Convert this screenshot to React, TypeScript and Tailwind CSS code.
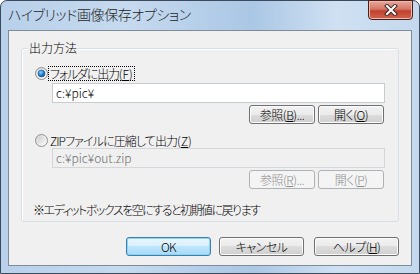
import React from "react";

const jp = "font-['Noto_Sans_CJK_JP',sans-serif] [font-feature-settings:'palt']";

function Radio({ checked }: { checked?: boolean }) {
    return (
        <svg width="13" height="13" viewBox="0 0 13 13" className="shrink-0">
            <defs>
                <linearGradient id="rOuter" x1="0" y1="0" x2="1" y2="1">
                    <stop offset="0" stopColor="#d6d6d6" />
                    <stop offset="1" stopColor="#ffffff" />
                </linearGradient>
                <linearGradient id="rInner" x1="0" y1="0" x2="1" y2="1">
                    <stop offset="0" stopColor="#cfcfcf" />
                    <stop offset="1" stopColor="#f6f6f6" />
                </linearGradient>
                <radialGradient id="rDot" cx="0.4" cy="0.35" r="0.7">
                    <stop offset="0" stopColor="#8fd0ff" />
                    <stop offset="0.5" stopColor="#2a8ad4" />
                    <stop offset="1" stopColor="#0b3f78" />
                </radialGradient>
            </defs>
            <circle cx="6.5" cy="6.5" r="6" fill="url(#rOuter)" stroke="#8e8f8f" strokeWidth="1" />
            <circle cx="6.5" cy="6.5" r="4" fill="url(#rInner)" />
            {checked && <circle cx="6.5" cy="6.5" r="3.5" fill="url(#rDot)" stroke="#1a5a9a" strokeWidth="0.5" />}
        </svg>
    );
}

function Btn({ children, w, disabled, primary }: { children: React.ReactNode; w: string; disabled?: boolean; primary?: boolean }) {
    const base = "flex items-center justify-center rounded-[3px] border text-[12px] leading-none tracking-[-0.5px]";
    if (disabled) {
        return <div className={`${base} ${w} border-[#adb2b5] bg-[#f4f4f4] text-[#8d8d8d]`}>{children}</div>;
    }
    if (primary) {
        return (
            <div className={`${base} ${w} border-[#3c7fb1] bg-[linear-gradient(#eaf6fd_0%,#d9f0fc_50%,#bee6fd_50%,#a7d9f5_100%)] text-black shadow-[inset_0_0_0_1px_#8fd3f5]`}>
                {children}
            </div>
        );
    }
    return (
        <div className={`${base} ${w} border-[#707070] bg-[linear-gradient(#f2f2f2_0%,#ebebeb_50%,#dddddd_50%,#cfcfcf_100%)] text-black shadow-[inset_0_0_0_1px_#fcfcfc]`}>
            {children}
        </div>
    );
}

export default function App() {
    return (
        <div className={`${jp} font-light w-[420px] h-[274px] flex flex-col rounded-t-[7px] border border-[#3c4b5c] bg-[linear-gradient(90deg,#b8d0ea_0%,#c6daef_30%,#aac7e5_60%,#cfe0f2_80%,#c4d9ee_100%)]`}>
            <div className="h-[29px] flex items-start shrink-0">
                <div className="pl-[7px] pt-[5px] text-[14px] leading-[17px] tracking-[-0.4px] text-[#1e1e1e]">ハイブリッド画像保存オプション</div>
                <div className="ml-auto mr-[6px] -mt-[1px] w-[45px] h-[20px] rounded-b-[4px] border border-[#4b1d18] bg-[linear-gradient(#e8a99d_0%,#d47766_45%,#c1402c_55%,#d06450_100%)] flex items-center justify-center shadow-[inset_0_0_0_1px_#f0b9ae]">
                    <svg width="14" height="12" viewBox="0 0 14 12">
                        <path d="M3 2 L11 10 M11 2 L3 10" stroke="#3b2a2a" strokeWidth="4" strokeLinecap="square" />
                        <path d="M3 2 L11 10 M11 2 L3 10" stroke="#ffffff" strokeWidth="2" strokeLinecap="square" />
                    </svg>
                </div>
            </div>
            <div className="flex-1 mx-[7px] mb-[7px] border border-[#7e8b99] bg-[#f0f0f0] flex flex-col text-[12px] text-black">
                <div className="mt-[17px] ml-[12px] mr-[12px] h-[174px] rounded-[3px] border border-[#d5dfe5] flex flex-col shadow-[inset_1px_1px_0_#ffffff]">
                    <div className="-mt-[9px] ml-[6px] self-start px-[1px] bg-[#f0f0f0] leading-[16px]">出力方法</div>
                    <div className="mt-[10px] h-[15px] pl-[13px] flex items-center">
                        <Radio checked />
                        <span className="ml-[1px] px-[1px] leading-[13px] outline outline-1 outline-dotted outline-black">
                            <span className="tracking-[-1.2px]">フォルダに出力</span>(<u>F</u>)
                        </span>
                    </div>
                    <div className="mt-[2px] ml-[30px] mr-[13px] h-[20px] border border-[#c7ccd1] bg-white flex items-center pl-[3px]">c:¥pic¥</div>
                    <div className="mt-[2px] mr-[14px] h-[19px] flex justify-end gap-[3px]">
                        <Btn w="w-[66px]">参照(<u>B</u>)...</Btn>
                        <Btn w="w-[66px]">開く(<u>O</u>)</Btn>
                    </div>
                    <div className="mt-[9px] h-[15px] pl-[13px] flex items-center">
                        <Radio />
                        <span className="ml-[2px] leading-[13px]">
                            <span className="tracking-[-0.9px]">ZIPファイルに圧縮して出力</span>(<u>Z</u>)
                        </span>
                    </div>
                    <div className="ml-[30px] mr-[13px] h-[20px] border border-[#d3d6da] bg-[#f0f0f0] text-[#6d6d6d] flex items-center pl-[3px]">c:¥pic¥out.zip</div>
                    <div className="mt-[2px] mr-[14px] h-[19px] flex justify-end gap-[3px]">
                        <Btn w="w-[66px]" disabled>参照(<u>R</u>)...</Btn>
                        <Btn w="w-[66px]" disabled>開く(<u>P</u>)</Btn>
                    </div>
                    <div className="mt-[13px] ml-[11px] leading-[16px] tracking-[-1.5px]">※エディットボックスを空にすると初期値に戻ります</div>
                </div>
                <div className="mt-[15px] mr-[12px] h-[19px] flex justify-end">
                    <Btn w="w-[85px]" primary>OK</Btn>
                    <div className="w-[8px]" />
                    <Btn w="w-[85px]">キャンセル</Btn>
                    <div className="w-[10px]" />
                    <Btn w="w-[85px]">ヘルプ(<u>H</u>)</Btn>
                </div>
            </div>
        </div>
    );
}
